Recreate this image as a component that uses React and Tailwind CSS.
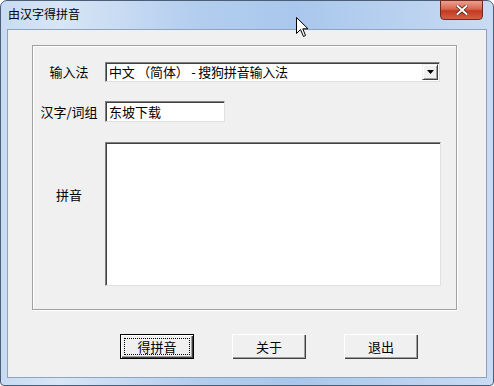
export default function App() {
    const font = { fontFamily: '"Noto Sans CJK SC", "Liberation Sans", sans-serif' };

    return (
        <div className="w-[494px] h-[386px] bg-white">
            {/* Window frame */}
            <div
                className="relative w-[494px] h-[386px] flex flex-col rounded-t-[7px] rounded-b-[4px] border border-[#4a5e78] bg-[linear-gradient(90deg,#c7dbf2_0%,#d8e6f6_12%,#b3cdee_40%,#a9c7ec_60%,#bcd3f0_85%,#c9dcf3_100%)] text-black"
                style={font}
            >
                {/* Title bar */}
                <div className="h-[28px] flex items-start justify-between pl-[7px] pr-[10px] shrink-0">
                    <span className="mt-[5px] text-[12px] leading-[16px]">由汉字得拼音</span>
                    <button className="w-[43px] h-[20px] -mt-px rounded-b-[4px] border border-[#6b2b22] bg-[linear-gradient(180deg,#eba08e_0%,#d9654f_45%,#c4391f_55%,#d45f45_100%)] flex items-center justify-center">
                        <svg width="12" height="10" viewBox="0 0 12 10">
                            <path d="M1.5 1 L10.5 9 M10.5 1 L1.5 9" stroke="#4d1a12" strokeWidth="3.4" strokeLinecap="square" />
                            <path d="M1.5 1 L10.5 9 M10.5 1 L1.5 9" stroke="#ffffff" strokeWidth="2" strokeLinecap="square" />
                        </svg>
                    </button>
                </div>

                {/* Client area */}
                <div className="flex-1 mx-[6px] mb-[7px] border border-[#8ea3bd] bg-[#f0f0f0] flex flex-col pl-[24px] pr-[29px] pt-[15px]">
                    {/* Group box */}
                    <div className="h-[265px] border border-[#a0a0a0] shadow-[inset_1px_1px_0_#ffffff,1px_1px_0_#ffffff] flex flex-col pt-[16px] text-[13px]">
                        <div className="flex items-center h-[20px]">
                            <span className="w-[72px] text-center">输入法</span>
                            <div className="w-[335px] h-[20px] bg-white border-t border-l border-[#808080] border-b border-r border-b-[#e0e0e0] border-r-[#e0e0e0] shadow-[inset_1px_1px_0_#404040] flex items-center justify-between pl-[3px] pr-[1px]">
                                <span className="leading-[16px] whitespace-pre tracking-[-0.2px]">中文 （简体） - 搜狗拼音输入法</span>
                                <div className="w-[16px] h-[16px] bg-[#f0f0f0] border-t border-l border-[#f0f0f0] border-b border-r border-b-[#404040] border-r-[#404040] shadow-[inset_1px_1px_0_#ffffff,inset_-1px_-1px_0_#a0a0a0] flex items-center justify-center">
                                    <svg width="7" height="4" viewBox="0 0 7 4">
                                        <path d="M0 0 H7 L3.5 4 Z" fill="#000" />
                                    </svg>
                                </div>
                            </div>
                        </div>

                        <div className="flex items-center h-[21px] mt-[19px]">
                            <span className="w-[72px] text-center whitespace-nowrap">汉字/词组</span>
                            <div className="w-[120px] h-[21px] bg-white border-t border-l border-[#808080] border-b border-r border-b-[#e0e0e0] border-r-[#e0e0e0] shadow-[inset_1px_1px_0_#404040] flex items-center pl-[3px]">
                                <span className="leading-[16px]">东坡下载</span>
                            </div>
                        </div>

                        <div className="flex items-start h-[144px] mt-[20px]">
                            <span className="w-[72px] text-center mt-[45px] leading-[16px]">拼音</span>
                            <div className="w-[336px] h-[144px] bg-white border-t border-l border-[#808080] border-b border-r border-b-[#e0e0e0] border-r-[#e0e0e0] shadow-[inset_1px_1px_0_#404040]" />
                        </div>
                    </div>

                    {/* Buttons */}
                    <div className="flex gap-[38px] mt-[24px] pl-[88px] text-[13px]">
                        <button className="w-[74px] h-[25px] border border-[#000] bg-[#f0f0f0] shadow-[inset_1px_1px_0_#ffffff,inset_-1px_-1px_0_#404040,inset_-2px_-2px_0_#a0a0a0] p-[3px]">
                            <div className="w-full h-full border border-dotted border-[#000] flex items-center justify-center leading-[14px]">得拼音</div>
                        </button>
                        <button className="w-[74px] h-[25px] bg-[#f0f0f0] shadow-[inset_1px_1px_0_#ffffff,inset_-1px_-1px_0_#404040,inset_-2px_-2px_0_#a0a0a0] flex items-center justify-center leading-[14px]">关于</button>
                        <button className="w-[74px] h-[25px] bg-[#f0f0f0] shadow-[inset_1px_1px_0_#ffffff,inset_-1px_-1px_0_#404040,inset_-2px_-2px_0_#a0a0a0] flex items-center justify-center leading-[14px]">退出</button>
                    </div>
                </div>

                {/* Mouse pointer */}
                <svg className="absolute left-[295px] top-[16px]" width="13" height="21" viewBox="0 0 13 21">
                    <path d="M0.5 0.5 V16.5 L4.5 12.5 L7.5 19.5 L9.5 18.5 L6.8 11.8 H12 Z" fill="#ffffff" stroke="#000000" strokeWidth="1" strokeLinejoin="miter" />
                </svg>
            </div>
        </div>
    );
}
